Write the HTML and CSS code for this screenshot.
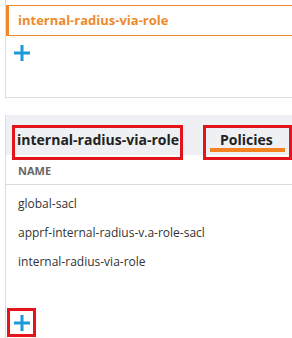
FILE: index.html
```html
<!DOCTYPE html>
<html lang="en">
<head>
    <meta charset="UTF-8">
    <title>Roles</title>
    <link rel="stylesheet" href="styles.css">
</head>
<body>
    <div class="roles-panel">
        <div class="role-item">internal-radius-via-role</div>
        <div class="add-btn">
            <svg width="18" height="18" viewBox="0 0 18 18"><path d="M9 1v16M1 9h16" stroke="#1a9ad6" stroke-width="3"/></svg>
        </div>
    </div>

    <div class="detail-panel">
        <div class="tabs">
            <div class="tab tab-name">internal-radius-via-role</div>
            <div class="tab tab-policies"><span>Policies</span></div>
        </div>
        <div class="col-head">NAME</div>
        <div class="rows">
            <div class="row">global-sacl</div>
            <div class="row">apprf-internal-radius-v.a-role-sacl</div>
            <div class="row">internal-radius-via-role</div>
        </div>
        <div class="add-btn add-boxed">
            <svg width="18" height="18" viewBox="0 0 18 18"><path d="M9 1v16M1 9h16" stroke="#1a9ad6" stroke-width="3"/></svg>
        </div>
    </div>
</body>
</html>
```

FILE: styles.css
```css
body {
    margin: 0;
    font-family: "Open Sans", sans-serif;
    background: #fff;
    overflow: hidden;
}
.roles-panel {
    margin-left: 5px;
    height: 98px;
    box-sizing: border-box;
    padding-top: 5px;
    border-left: 1px solid #dcdcdc;
    border-bottom: 1px solid #dcdcdc;
}
.role-item {
    height: 29px;
    line-height: 29px;
    border: 1px solid #ee8a2c;
    border-left: 3px solid #ee8a2c;
    border-right: none;
    padding-left: 9px;
    font-size: 13px;
    font-weight: bold;
    color: #ee8a2c;
}
.add-btn {
    margin: 8px 0 0 7px;
    width: 18px;
    height: 18px;
}
.add-btn svg {
    display: block;
}
.detail-panel {
    margin-top: 17px;
    margin-left: 5px;
    height: 223px;
    border-left: 1px solid #dcdcdc;
}
.tabs {
    height: 40px;
    background: #eef0f3;
    display: flex;
    gap: 20px;
    padding: 10px 0 0 6px;
    box-sizing: border-box;
}
.tab {
    height: 35px;
    box-sizing: border-box;
    border: 3px solid #e4141b;
    font-size: 14px;
    font-weight: bold;
    color: #222;
    position: relative;
    z-index: 1;
}
.tab-name {
    width: 171px;
    padding: 2px 0 0 2px;
}
.tab-policies {
    width: 89px;
    padding: 2px 0 0 14px;
}
.tab-policies span::after {
    content: "";
    position: absolute;
    left: 4px;
    right: 4px;
    bottom: 5px;
    height: 4px;
    background: #f58220;
}
.col-head {
    height: 29px;
    line-height: 31px;
    padding-left: 12px;
    font-size: 11px;
    font-weight: bold;
    color: #666;
    border-bottom: 1px solid #dcdcdc;
}
.rows {
    padding-top: 4px;
}
.row {
    height: 29px;
    line-height: 29px;
    padding-left: 12px;
    font-size: 12px;
    color: #333;
}
.add-btn.add-boxed {
    margin: 32px 0 0 1px;
    width: 29px;
    height: 29px;
    box-sizing: border-box;
    border: 3px solid #e4141b;
    padding: 3px;
}
.add-boxed svg {
    width: 18px;
    height: 18px;
}
```
